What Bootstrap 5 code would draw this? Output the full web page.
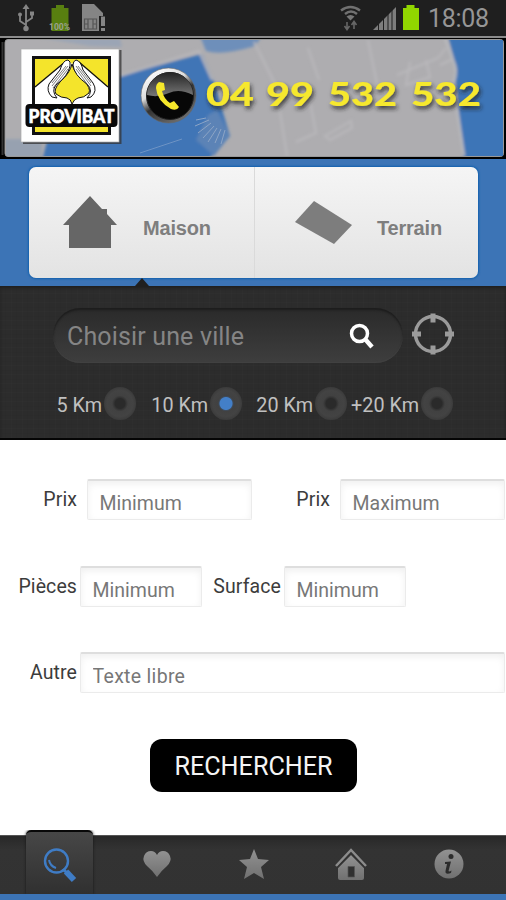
<!DOCTYPE html>
<html lang="fr">
<head>
<meta charset="utf-8">
<meta name="viewport" content="width=device-width, initial-scale=1">
<title>Provibat</title>
<link href="https://cdn.jsdelivr.net/npm/bootstrap@5.3.0/dist/css/bootstrap.min.css" rel="stylesheet">
<style>
body{font-family:Roboto,"Liberation Sans",sans-serif;width:506px;height:900px;overflow:hidden;background:#fff}
svg{display:block;flex:none}
.statusbar{height:36px;background:#1f1f1f}
.banner{height:123px;background:#000}
.switcher{height:127px;background:#3c74b6;padding:8px 28px 0 29px}
.choices{height:111px;border-radius:7px;background:linear-gradient(#f5f5f5,#e3e3e3);box-shadow:0 0 2px 1px #1261ae;overflow:hidden}
.choice{font:bold 20px "Liberation Sans",Arial,sans-serif;letter-spacing:-.2px;color:#7e7e7e;padding-top:12px}
.choice-house{width:226px;padding-left:34px;border-right:1px solid #dadada}
.choice-land{padding-left:40px}
.pointer{left:135px;bottom:0}
.search-zone{height:154px;border-bottom:2px solid #050505;background:
 repeating-linear-gradient(90deg,rgba(255,255,255,.012) 0 1px,transparent 1px 5px,rgba(0,0,0,.025) 5px 6px,transparent 6px 11px),
 repeating-linear-gradient(0deg,rgba(255,255,255,.012) 0 1px,transparent 1px 4px,rgba(0,0,0,.025) 4px 5px,transparent 5px 9px),#2c2c2c;
 box-shadow:inset 0 2px 3px #1f1f1f;padding:22px 0 0 53px}
.city{width:350px;height:55px;border-radius:28px;background:linear-gradient(#2a2a2a,#3e3e3e);box-shadow:inset 0 2px 2px #1d1d1d,inset 0 -1px 1px #424242;padding:1px 28px 0 14px}
.city input{font-size:25px;letter-spacing:.15px;color:#858585;background:none;border:0;padding:1px 0 0;width:230px;outline:0}
.city input::placeholder{color:#858585;opacity:1}
.radii{height:36px;margin-top:22px;color:#c0c0c0;font-size:19.8px}
.dist{display:flex;align-items:center;justify-content:flex-end;white-space:nowrap}
.dist span{padding-top:6px}
.knob{width:32px;height:33px;border-radius:50%;margin-left:2px;background:radial-gradient(circle,#2a2a2a 0 5px,#333 6px,#414141 8px,#434343 13px,#3c3c3c 16px)}
.knob.on{background:radial-gradient(circle,#437fc8 0 6px,#3e4a59 7px,#414141 8px,#434343 13px,#3c3c3c 16px)}
.criteria{height:395px;padding-top:39px}
.line{height:41px;margin-bottom:45.5px;font-size:19.5px;color:#3c3c3c;letter-spacing:.1px}
.line label{text-align:right;flex:none;padding-top:1px}
.field{height:41px;border:1px solid #ebebeb;border-top:2px solid #dedede;border-radius:2px;box-shadow:inset 0 3px 7px #f0f0f0;background:#fff;padding:7px 0 0 11.5px;font-size:19.5px;color:#777;outline:0;min-width:0;flex:none}
.field::placeholder{color:#777;opacity:1}
.wide-text{letter-spacing:.3px}
.go{width:207px;height:53px;border-radius:12px;background:#000;color:#f4f4f4;font-size:25.2px;border:0;padding:4px 0 0 1px}
.tabs{height:59px;background:linear-gradient(#282828,#333 14px,#323232);border-top:1px solid #555}
.tab-item{width:97.3px;flex:none;height:58px;padding-bottom:2px}
.tab-on{width:67px;height:64px;margin:-6px 15px 0 26px;background:linear-gradient(#474747,#303030);border-top:2px solid #080808;border-radius:5px 5px 0 0;box-shadow:0 0 3px #161616;clip-path:inset(0 -3px 0 -3px);padding-top:3px}
.strip{height:6px;background:#3c74b6}
</style>
<script src="https://cdn.jsdelivr.net/npm/bootstrap@5.3.0/dist/js/bootstrap.bundle.min.js"></script>
</head>
<body>
<div class="statusbar">
<svg width="506" height="36" viewBox="0 0 506 36">
 <g stroke="#858585" stroke-width="1.8" fill="none"><path d="M26 8V29M26 25L20 21V14M26 22L32 18V13"/></g>
 <g fill="#858585"><path d="M26 4l3.500 5h-7z"/><circle cx="26" cy="28.500" r="2.700"/><circle cx="20" cy="14.500" r="2"/><path d="M30 11.500h4v4h-4z"/></g>
 <path d="M56 5h8v3h4.500v23h-17V8H56z" fill="#587f10"/>
 <text x="49" y="29.500" font-size="8.500" font-weight="bold" fill="#9ba28d" textLength="21" lengthAdjust="spacingAndGlyphs">100%</text>
 <path d="M82 4h12l9 9v3h-4v15H82z" fill="#858585"/>
 <path d="M84.500 19h12v10h-12zM88 19v10M93 19v10M84.500 24h3.500M93 24h3.500" fill="none" stroke="#555" stroke-width="1.200"/>
 <path d="M101 16.500h4V26h-4zM101 28h4v3h-4z" fill="#858585"/>
 <g fill="none" stroke="#717171" stroke-width="2.400"><path d="M341 10.500q9.500-7 19 0M345 14q6-5 12 0"/></g><path d="M346.500 16.500q4-3 8 0l-4 4z" fill="#777"/>
 <path d="M347 22v7M344.500 26l2.500 3.500 2.500-3.500M354 29v-7M351.500 25l2.500-3.500 2.500 3.500" fill="none" stroke="#666" stroke-width="1.600"/>
 <path d="M373 30L396 7V30z" fill="#7d7d7d"/><path d="M378.500 20v11M383.500 16v15M388 11v20M392 7v24" stroke="#1f1f1f" stroke-width="1"/>
 <path d="M406.500 5h8v3h4.500v22h-16V8h3.500z" fill="#91d600"/>
 <text x="428" y="26.500" font-size="25" fill="#969696" textLength="61">18:08</text>
</svg>
</div>
<header class="banner">
<svg width="506" height="123" viewBox="0 36 506 123">
 <defs>
  <filter id="haze" x="-5%" y="-5%" width="110%" height="110%"><feGaussianBlur stdDeviation="1.500"/></filter>
  <filter id="drop" x="-10%" y="-30%" width="120%" height="180%"><feDropShadow dx="1.500" dy="3" stdDeviation="2.200" flood-color="#222" flood-opacity=".8"/></filter>
  <linearGradient id="rim" x1=".2" y1="0" x2=".8" y2="1"><stop offset="0" stop-color="#fff"/><stop offset=".35" stop-color="#ddd"/><stop offset=".55" stop-color="#333"/><stop offset="1" stop-color="#777"/></linearGradient>
  <linearGradient id="gloss" x1="0" y1="0" x2="0" y2="1"><stop offset="0" stop-color="#222"/><stop offset="1" stop-color="#777"/></linearGradient>
  <clipPath id="frame"><rect x="6" y="40" width="497" height="116"/></clipPath>
 </defs>
 <path d="M0 37H506" stroke="#8c8c8c" stroke-width="2"/>
 <path d="M2.500 42V155" stroke="#333" stroke-width="2"/>
 <rect x="5" y="39.500" width="498.500" height="117" rx="3" fill="#aeadb0" stroke="#999"/>
 <g clip-path="url(#frame)">
  <g filter="url(#haze)">
   <path d="M42 160L48 138 118 76 202 54 214 82 230 136 208 160z" fill="#3f75b6"/>
   <path d="M208 115L217 110 230 136 214 156 196 140z" fill="#5c83b6"/>
   <path d="M0 139H42V158H0z" fill="#97a1b0"/>
   <path d="M200 36H262L255 46Q222 56 206 51z" fill="#6e8fba"/>
   <path d="M42 38L120 38 122 47 90 46z" fill="#9ba5b5"/>
   <path d="M448 36L457 70Q453 83 457 92L463 160H510V36z" fill="#3d74b7"/>
   <path d="M445 38L453 60Q458 70 454 82L456 101 464 156" fill="none" stroke="#b9babd" stroke-width="2.500"/>
   <g fill="none" stroke="#b9b8bb" stroke-width="2"><path d="M120 76L199 51 212 80M254 42L276 86 287 156M308 48L319 80M368 40L377 84M309 96L316 133 296 142M325 136L351 121 352 128 330 140z"/><path d="M397 75L438 58 446 48M410 62L406 85 430 77 426 60M440 65L453 59"/></g>
  </g>
  <g stroke="#8da5c6" stroke-width="1" fill="none"><path d="M209 120L195 126M211 123L198 133M214 126L203 138M217 128L208 142M221 129L215 143M225 130L221 144M206 118L196 120"/><path d="M140 153L182 139" stroke="#6d93c4"/></g>
 </g>
 <rect x="23" y="50" width="98.500" height="94" fill="#333" opacity=".75"/>
 <rect x="21" y="49" width="98" height="93" fill="#fefefe" stroke="#aaa" stroke-width=".7"/>
 <rect x="33.500" y="57.500" width="76" height="76" fill="#f4e42b" stroke="#111" stroke-width="3"/>
 <path d="M35 87L68 60 72 64 76 60 108 87V108H35z" fill="#fff"/>
 <path d="M35 87L65 62M108 87L79 62" stroke="#111" stroke-width="1.300"/>
 <path d="M72 64Q70 73 60 82Q53 90 56 94Q61 98 67 98Q71 99 72 104Q74 99 78 98Q84 98 89 93Q91 88 84 81Q74 73 72 64z" fill="#f4e42b" stroke="#111"/>
 <path d="M68 60Q63 60 60 70L49 84Q46 91 52 97L57 98Q51 91 56 85Q68 76 70 66Q71 61 68 60zM76 60Q81 61 83 70L93 83Q98 91 91 97L87 98Q94 91 87 84Q74 75 73 65Q73 61 76 60z" fill="#fff" stroke="#111"/>
 <path d="M66 66L52 83M68 66L52 86M68 69L53 88M78 66L91 83M76 66L91 86M76 69L90 88" stroke="#444" stroke-width=".7" fill="none"/>
 <rect x="25.500" y="104" width="92" height="23" rx="4" fill="#090909"/>
 <text x="28.500" y="122.500" font-family="Lato,'Open Sans',sans-serif" font-size="19.500" font-weight="900" fill="#fff" stroke="#fff" stroke-width=".6" textLength="86" lengthAdjust="spacingAndGlyphs">PROVIBAT</text>
 <circle cx="168.500" cy="95.500" r="27.500" fill="url(#rim)" stroke="#666" stroke-width=".6"/>
 <circle cx="170" cy="96" r="23.500" fill="#070707" stroke="#222"/>
 <path d="M147 95A23 23 0 0 1 193 95Q179 88 169 93Q158 98 147 95z" fill="url(#gloss)"/>
 <path d="M159 82L164 83 165 90 162 91Q164 99 170 103L174 101 179 107Q177 111 171 109Q157 101 156 88Q156 84 159 82z" fill="#f5e72b"/>
 <g font-family="Lato,'Open Sans',sans-serif" font-size="32" font-weight="900" fill="#f6e82d" filter="url(#drop)">
  <text y="106"><tspan x="206" textLength="48" lengthAdjust="spacingAndGlyphs">04</tspan> <tspan x="266" textLength="48" lengthAdjust="spacingAndGlyphs">99</tspan> <tspan x="328" textLength="69" lengthAdjust="spacingAndGlyphs">532</tspan> <tspan x="411" textLength="70" lengthAdjust="spacingAndGlyphs">532</tspan></text>
 </g>
</svg>
</header>
<nav class="switcher position-relative">
 <div class="choices d-flex">
  <div class="choice choice-house d-flex align-items-center">
   <svg width="54" height="52" viewBox="0 0 54 52" style="margin-top:-13px"><path d="M27 0L39 13H44V18L54 29H48V52H6V29H0z" fill="#666"/></svg><span style="margin-left:26px">Maison</span>
  </div>
  <div class="choice choice-land d-flex align-items-center">
   <svg width="57" height="43" viewBox="0 0 57 43" style="margin-top:-13px"><path d="M19 0L57 24 39 43 0 21z" fill="#7d7d7d"/></svg><span style="margin-left:25px">Terrain</span>
  </div>
 </div>
 <svg class="pointer position-absolute" width="14" height="8" viewBox="0 0 14 8"><path d="M0 8L7 0 14 8z" fill="#202020"/></svg>
</nav>
<section class="search-zone">
 <div class="d-flex align-items-center">
  <div class="city d-flex align-items-center justify-content-between">
   <input type="text" placeholder="Choisir une ville" aria-label="Ville">
   <svg width="27" height="27" viewBox="0 0 27 27"><circle cx="11.500" cy="10.500" r="8" fill="none" stroke="#fff" stroke-width="3.500"/><path d="M17 16L24 24" stroke="#fff" stroke-width="4.500"/></svg>
  </div>
  <svg width="44" height="44" viewBox="0 0 44 44" style="margin:-3px 0 0 8px"><g fill="none" stroke="#9b9b9b"><circle cx="22" cy="22" r="17.500" stroke-width="3.500"/><path d="M22 1.500V10.500M22 33.500V42.500M1 22H10M34 22H43" stroke-width="5"/></g></svg>
 </div>
 <div class="radii d-flex">
  <div class="dist" style="width:83px"><span>5 Km</span><div class="knob"></div></div>
  <div class="dist" style="width:106px"><span>10 Km</span><div class="knob on"></div></div>
  <div class="dist" style="width:105px"><span>20 Km</span><div class="knob"></div></div>
  <div class="dist" style="width:106px"><span>+20 Km</span><div class="knob"></div></div>
 </div>
</section>
<main class="criteria">
 <div class="line d-flex align-items-center">
  <label style="width:77px;margin-right:10px">Prix</label><input class="field" style="width:165px" placeholder="Minimum">
  <label style="width:78px;margin-right:10px">Prix</label><input class="field" style="width:165px" placeholder="Maximum">
 </div>
 <div class="line d-flex align-items-center">
  <label style="width:77px;margin-right:3px">Pièces</label><input class="field" style="width:122px" placeholder="Minimum">
  <label style="width:79px;margin-right:3px">Surface</label><input class="field" style="width:122px" placeholder="Minimum">
 </div>
 <div class="line d-flex align-items-center">
  <label style="width:77px;margin-right:3px">Autre</label><input class="field wide-text" style="width:425px" placeholder="Texte libre">
 </div>
 <div class="d-flex justify-content-center"><button class="go" type="button">RECHERCHER</button></div>
</main>
<footer>
 <svg width="0" height="0" class="position-absolute"><defs><linearGradient id="metal" x1="0" y1="0" x2="0" y2="1"><stop offset="0" stop-color="#929292"/><stop offset="1" stop-color="#707070"/></linearGradient></defs></svg>
 <div class="tabs d-flex">
  <div class="tab-on d-flex justify-content-center align-items-center"><svg width="34" height="36" viewBox="0 0 34 36"><circle cx="13.500" cy="14" r="11.500" fill="none" stroke="#3f7cc5" stroke-width="2.400"/><path d="M6 13Q7 19 13 21" fill="none" stroke="#3f7cc5" stroke-width="2"/><path d="M20 22L24 26" stroke="#3f7cc5" stroke-width="3"/><path d="M23 24.500L31 33" stroke="#3f7cc5" stroke-width="6"/></svg></div>
  <div class="tab-item d-flex justify-content-center align-items-center"><svg width="30" height="28" viewBox="0 0 30 28"><path d="M15 27Q11 21 5 16Q0 11 2 6Q4 1 9 1Q13 1 15 5Q17 1 21 1Q26 1 28 6Q30 11 25 16Q19 21 15 27z" fill="url(#metal)"/></svg></div>
  <div class="tab-item d-flex justify-content-center align-items-center"><svg width="32" height="32" viewBox="0 0 32 32"><path d="M16 1L20 11 31 12 23 19 26 31 16 25 6 31 9 19 1 12 12 11z" fill="url(#metal)"/></svg></div>
  <div class="tab-item d-flex justify-content-center align-items-center"><svg width="32" height="34" viewBox="0 0 32 34"><path d="M1 19L16 3 31 19" fill="none" stroke="#8c8c8c" stroke-width="2.500"/><path d="M16 8L29 21V31Q29 33 27 33H5Q3 33 3 31V21z" fill="url(#metal)"/><path d="M1.500 21.500L16 6.500 30.500 21.500" fill="none" stroke="#333" stroke-width="1.200"/><path d="M13 19.500h6.500v10.500H13z" fill="#303030" stroke="#555" stroke-width=".7"/></svg></div>
  <div class="tab-item d-flex justify-content-center align-items-center"><svg width="32" height="32" viewBox="0 0 32 32"><circle cx="16" cy="16" r="14.500" fill="url(#metal)"/><circle cx="18" cy="8.500" r="2.500" fill="#2c2c2c"/><path d="M12 14L18 13.500 15.500 23Q16 24 18.500 22.500L18 25Q12 27 12.500 23L14 16H12z" fill="#2c2c2c"/></svg></div>
 </div>
 <div class="strip"></div>
</footer>
</body>
</html>
